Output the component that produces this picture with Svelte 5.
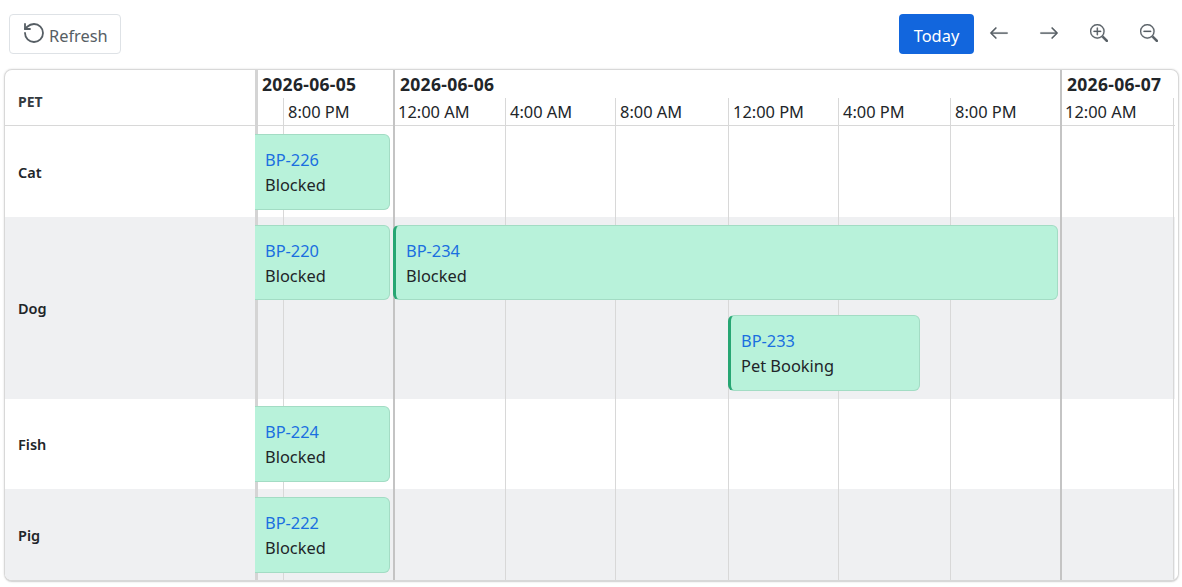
<script lang="ts">
  const dayLines = [0, 138, 805];
  const hourLines = [28, 250, 360, 473, 583, 695, 918];
  const days = [
    { label: '2026-06-05', x: 0 },
    { label: '2026-06-06', x: 138 },
    { label: '2026-06-07', x: 805 },
  ];
  const ticks = [
    { label: '8:00 PM', x: 28 },
    { label: '12:00 AM', x: 138 },
    { label: '4:00 AM', x: 250 },
    { label: '8:00 AM', x: 360 },
    { label: '12:00 PM', x: 473 },
    { label: '4:00 PM', x: 583 },
    { label: '8:00 PM', x: 695 },
    { label: '12:00 AM', x: 805 },
  ];
  const rows = [
    { pet: 'Cat', height: 91, events: [{ id: 'BP-226', text: 'Blocked', x: 0, y: 8, w: 135, h: 76, cut: true }] },
    {
      pet: 'Dog',
      height: 182,
      events: [
        { id: 'BP-220', text: 'Blocked', x: 0, y: 8, w: 135, h: 75, cut: true },
        { id: 'BP-234', text: 'Blocked', x: 138, y: 8, w: 665, h: 75 },
        { id: 'BP-233', text: 'Pet Booking', x: 473, y: 98, w: 192, h: 76 },
      ],
    },
    { pet: 'Fish', height: 90, events: [{ id: 'BP-224', text: 'Blocked', x: 0, y: 7, w: 135, h: 76, cut: true }] },
    { pet: 'Pig', height: 92, events: [{ id: 'BP-222', text: 'Blocked', x: 0, y: 8, w: 135, h: 76, cut: true }] },
  ];
</script>

<div class="page">
  <div class="toolbar">
    <button class="refresh">
      <svg width="24" height="24" viewBox="0 0 24 24" fill="none" stroke="currentColor" stroke-width="1.8" stroke-linecap="round" stroke-linejoin="round">
        <path d="M3 12a9 9 0 1 0 9-9 9.75 9.75 0 0 0-6.74 2.74L3 8" />
        <path d="M3 3v5h5" />
      </svg>
      <span>Refresh</span>
    </button>
    <div class="nav">
      <button class="today"><span>Today</span></button>
      <button class="icon" aria-label="Previous">
        <svg class="bold" width="20" height="20" viewBox="0 0 16 16" fill="currentColor">
          <path fill-rule="evenodd" d="M15 8a.5.5 0 0 0-.5-.5H2.707l3.147-3.146a.5.5 0 1 0-.708-.708l-4 4a.5.5 0 0 0 0 .708l4 4a.5.5 0 0 0 .708-.708L2.707 8.5H14.5A.5.5 0 0 0 15 8z" />
        </svg>
      </button>
      <button class="icon" aria-label="Next">
        <svg class="bold" width="20" height="20" viewBox="0 0 16 16" fill="currentColor">
          <path fill-rule="evenodd" d="M1 8a.5.5 0 0 1 .5-.5h11.793l-3.147-3.146a.5.5 0 0 1 .708-.708l4 4a.5.5 0 0 1 0 .708l-4 4a.5.5 0 0 1-.708-.708L13.293 8.5H1.5A.5.5 0 0 1 1 8z" />
        </svg>
      </button>
      <button class="icon" aria-label="Zoom in">
        <svg class="bold" width="18" height="18" viewBox="0 0 16 16" fill="currentColor">
          <path fill-rule="evenodd" d="M6.5 12a5.5 5.5 0 1 0 0-11 5.5 5.5 0 0 0 0 11zM13 6.5a6.5 6.5 0 1 1-13 0 6.5 6.5 0 0 1 13 0z" />
          <path d="M10.344 11.742c.03.04.062.078.098.115l3.85 3.85a1 1 0 0 0 1.415-1.414l-3.85-3.85a1.007 1.007 0 0 0-.115-.1 6.538 6.538 0 0 1-1.398 1.4z" />
          <path fill-rule="evenodd" d="M6.5 3a.5.5 0 0 1 .5.5V6h2.5a.5.5 0 0 1 0 1H7v2.5a.5.5 0 0 1-1 0V7H3.500a.5.5 0 0 1 0-1H6V3.500a.5.5 0 0 1 .5-.5z" />
        </svg>
      </button>
      <button class="icon" aria-label="Zoom out">
        <svg class="bold" width="18" height="18" viewBox="0 0 16 16" fill="currentColor">
          <path fill-rule="evenodd" d="M6.5 12a5.5 5.5 0 1 0 0-11 5.5 5.500 0 0 0 0 11zM13 6.500a6.500 6.500 0 1 1-13 0 6.500 6.500 0 0 1 13 0z" />
          <path d="M10.344 11.742c.03.04.062.078.098.115l3.85 3.85a1 1 0 0 0 1.415-1.414l-3.85-3.85a1.007 1.007 0 0 0-.115-.1 6.538 6.538 0 0 1-1.398 1.4z" />
          <path fill-rule="evenodd" d="M3 6.500a.5.5 0 0 1 .5-.5h6a.5.5 0 0 1 0 1h-6a.5.5 0 0 1-.5-.5z" />
        </svg>
      </button>
    </div>
  </div>

  <div class="card">
    <div class="labels">
      <div class="corner">PET</div>
      {#each rows as row, i}
        <div class="label" class:alt={i % 2 === 1} style="height: {row.height}px">{row.pet}</div>
      {/each}
    </div>

    <div class="timeline">
      <div class="head">
        {#each days as day}
          <span class="day" style="left: {day.x + 7}px">{day.label}</span>
        {/each}
        {#each ticks as tick}
          <span class="tick" style="left: {tick.x + 5}px">{tick.label}</span>
        {/each}
      </div>

      {#each rows as row, i}
        <div class="row" class:alt={i % 2 === 1} style="height: {row.height}px"></div>
      {/each}

      {#each hourLines as x}
        <i class="hour" style="left: {x}px"></i>
      {/each}
      {#each dayLines as x}
        <i class="daymark" class:first={x === 0} style="left: {x}px"></i>
      {/each}

      <div class="events">
        {#each rows as row}
          <div class="lane" style="height: {row.height}px">
            {#each row.events as ev}
              <div class="event" class:cut={ev.cut} style="left: {ev.x}px; top: {ev.y}px; width: {ev.w}px; height: {ev.h}px">
                <span class="id">{ev.id}</span>
                <span class="text">{ev.text}</span>
              </div>
            {/each}
          </div>
        {/each}
      </div>
    </div>
  </div>
</div>

<style>
  :global(body) {
    margin: 0;
    background: #fff;
  }

  .page {
    width: 1182px;
    height: 587px;
    padding: 14px 3px 0 4px;
    box-sizing: border-box;
    font-family: "Noto Sans", "Open Sans", sans-serif;
    font-size: 16.4px;
    color: #212529;
    overflow: hidden;
  }

  .toolbar {
    display: flex;
    justify-content: space-between;
    height: 40px;
    margin-bottom: 15px;
    padding: 0 5px;
  }

  button {
    font: inherit;
    cursor: pointer;
    background: none;
    border: 1px solid transparent;
    padding: 0;
  }

  .bold {
    stroke: currentColor;
    stroke-width: 0.25;
  }

  .refresh {
    width: 112px;
    height: 40px;
    display: flex;
    align-items: center;
    padding-left: 12px;
    gap: 3px;
    border-color: #dee2e6;
    border-radius: 4px;
    color: #565e64;
  }

  .refresh svg {
    margin-bottom: 2px;
  }

  .refresh span {
    margin-top: 2px;
  }

  .nav {
    display: flex;
    align-items: center;
  }

  .today {
    width: 75px;
    height: 40px;
    background: #1266dd;
    color: #fff;
    border-radius: 4px;
  }

  .today span {
    position: relative;
    top: 1px;
  }

  .icon {
    width: 50px;
    height: 40px;
    color: #565e64;
    display: flex;
    align-items: center;
    justify-content: center;
    padding-bottom: 3px;
  }

  .card {
    display: flex;
    height: 513px;
    box-sizing: border-box;
    border: 1px solid #d8d8d8;
    border-bottom-width: 2px;
    border-radius: 8px;
    box-shadow: 0 0 2px rgba(0, 0, 0, 0.15);
    overflow: hidden;
  }

  .labels {
    width: 250px;
    flex: none;
  }

  .corner {
    height: 56px;
    box-sizing: border-box;
    border-bottom: 1px solid #d8d8d8;
    display: flex;
    align-items: center;
    padding: 8px 0 0 13px;
    font-size: 14px;
    font-weight: 700;
    color: #343a40;
  }

  .label {
    display: flex;
    align-items: center;
    padding-left: 13px;
    font-size: 14.5px;
    font-weight: 600;
    color: #212529;
  }

  .alt {
    background: #eff0f2;
  }

  .timeline {
    flex: none;
    width: 920px;
    position: relative;
  }

  .head {
    height: 56px;
    box-sizing: border-box;
    border-bottom: 1px solid #d8d8d8;
    position: relative;
  }

  .day {
    position: absolute;
    top: 2px;
    font-size: 17.5px;
    letter-spacing: 0.3px;
    font-weight: 700;
    white-space: nowrap;
  }

  .tick {
    position: absolute;
    top: 30px;
    white-space: nowrap;
  }

  .hour {
    position: absolute;
    top: 28px;
    bottom: 0;
    width: 1px;
    background: #d8d8d8;
  }

  .daymark {
    position: absolute;
    top: 0;
    bottom: 0;
    width: 2px;
    background: #c4c4c4;
  }

  .daymark.first {
    width: 3px;
    background: #d4d4d4;
  }

  .events {
    position: absolute;
    top: 56px;
    left: 0;
    right: 0;
  }

  .lane {
    position: relative;
  }

  .event {
    position: absolute;
    box-sizing: border-box;
    padding: 12px 0 0 10px;
    background: #b8f2da;
    border: 1px solid #a3dcc4;
    border-left: 3px solid #27a673;
    border-radius: 6px;
    display: flex;
    flex-direction: column;
    line-height: 25px;
    white-space: nowrap;
  }

  .event.cut {
    border-left: none;
    border-top-left-radius: 0;
    border-bottom-left-radius: 0;
    padding-left: 10px;
  }

  .id {
    color: #1a6fe0;
  }

  .text {
    color: #212529;
  }
</style>
